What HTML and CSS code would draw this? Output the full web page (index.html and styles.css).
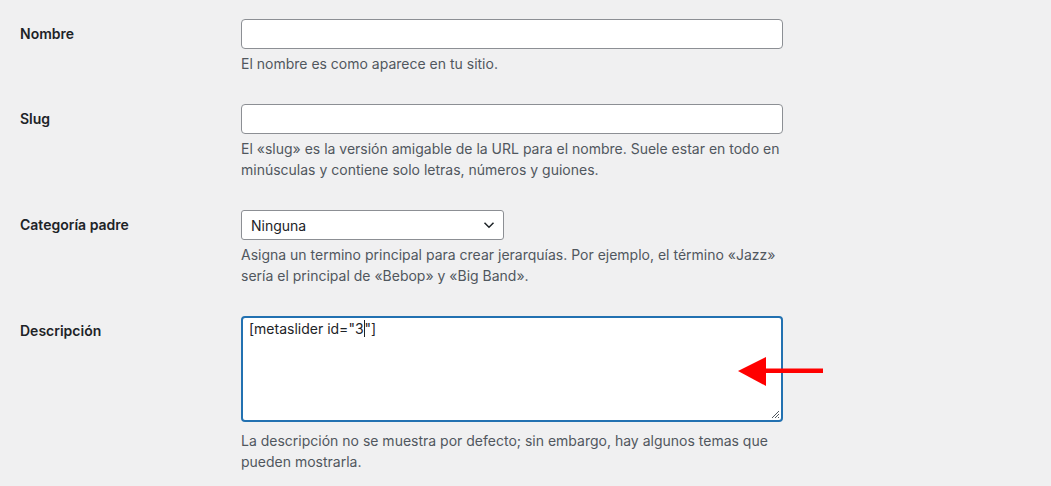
FILE: index.html
```html
<!DOCTYPE html>
<html lang="es">
  <head>
    <meta charset="UTF-8" />
    <title>Editar categoría</title>
    <link rel="stylesheet" href="styles.css">
  </head>
  <body>
    <form class="term-form">
      <div class="form-row">
        <label class="form-label" for="tag-name">Nombre</label>
        <div class="form-field">
          <input type="text" id="tag-name" class="text-input" />
          <p class="description">El nombre es como aparece en tu sitio.</p>
        </div>
      </div>
      <div class="form-row">
        <label class="form-label" for="tag-slug">Slug</label>
        <div class="form-field">
          <input type="text" id="tag-slug" class="text-input" />
          <p class="description">El «slug» es la versión amigable de la URL para el nombre. Suele estar en todo en minúsculas y contiene solo letras, números y guiones.</p>
        </div>
      </div>
      <div class="form-row">
        <label class="form-label" for="parent">Categoría padre</label>
        <div class="form-field">
          <div class="select-box" id="parent">
            <span>Ninguna</span>
            <svg class="chevron" width="12" height="8" viewBox="0 0 12 8"><path d="M1.5 1.8 6 6.2l4.5-4.4" fill="none" stroke="#1d2327" stroke-width="1.5"/></svg>
          </div>
          <p class="description">Asigna un termino principal para crear jerarquías. Por ejemplo, el término «Jazz» sería el principal de «Bebop» y «Big Band».</p>
        </div>
      </div>
      <div class="form-row">
        <label class="form-label" for="description">Descripción</label>
        <div class="form-field">
          <div class="text-area" id="description" role="textbox"><span class="typed">[metaslider id="3</span>"]<svg class="grip" width="10" height="10" viewBox="0 0 10 10"><path d="M9 2 2 9M9 5 5 9M9 8 8 9" stroke="#50575e" stroke-width="1"/></svg></div>
          <p class="description">La descripción no se muestra por defecto; sin embargo, hay algunos temas que pueden mostrarla.</p>
        </div>
      </div>
    </form>
    <svg class="arrow" width="90" height="32" viewBox="0 0 90 32">
      <path d="M30 12.5h57v4.5H30z" fill="#ff0000"/>
      <path d="M2 15 30 1v29z" fill="#ff0000"/>
    </svg>
  </body>
</html>
```

FILE: styles.css
```css
body {
    margin: 0;
    background: #f0f0f1;
    color: #1d2327;
    font-family: Inter, "Liberation Sans", Arial, sans-serif;
    font-size: 14px;
}

.term-form {
    padding: 4px 0 0 20px;
}

.form-row {
    display: flex;
}

.form-label {
    width: 200px;
    padding: 21px 10px 19px 0;
    font-weight: 600;
    line-height: 1.3;
}

.form-field {
    width: 548px;
    padding: 15px 10px 15px 11px;
}

.text-input {
    display: block;
    box-sizing: border-box;
    width: 542px;
    height: 30px;
    margin: 0;
    padding: 0 8px;
    background: #fff;
    border: 1px solid #8c8f94;
    border-radius: 4px;
    font: inherit;
}

.select-box {
    box-sizing: border-box;
    display: flex;
    align-items: center;
    justify-content: space-between;
    width: 263px;
    height: 30px;
    padding: 0 6px 0 9px;
    background: #fff;
    border: 1px solid #8c8f94;
    border-radius: 3px;
}

.chevron {
    margin-right: 2px;
}

.text-area {
    position: relative;
    box-sizing: border-box;
    width: 542px;
    height: 106px;
    margin-bottom: 8px;
    padding: 1px 6px;
    background: #fff;
    border: 2px solid #2271b1;
    border-radius: 4px;
    line-height: 20px;
    white-space: pre;
}

.typed {
    border-right: 1px solid #1d2327;
}

.grip {
    position: absolute;
    right: 1px;
    bottom: 1px;
}

.description {
    margin: 4px 0 0;
    color: #50575e;
    line-height: 1.5;
}

.arrow {
    position: absolute;
    left: 736px;
    top: 356px;
}
```
